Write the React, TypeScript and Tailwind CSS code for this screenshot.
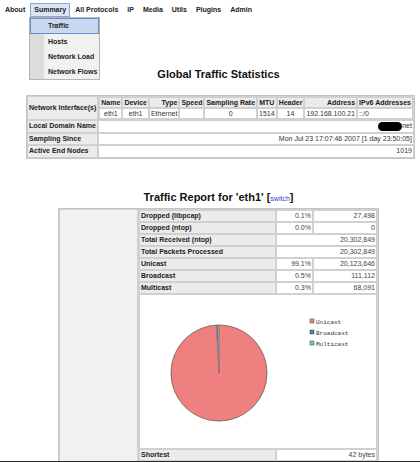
import React from "react";

const ifaceCols = [
  { head: "Name", val: "eth1", h: "text-center", v: "text-center" },
  { head: "Device", val: "eth1", h: "text-center", v: "text-center" },
  { head: "Type", val: "Ethernet", h: "text-right", v: "text-left" },
  { head: "Speed", val: "", h: "text-center", v: "text-center" },
  { head: "Sampling Rate", val: "0", h: "text-center", v: "text-center" },
  { head: "MTU", val: "1514", h: "text-center", v: "text-left" },
  { head: "Header", val: "14", h: "text-center", v: "text-center" },
  { head: "Address", val: "192.168.100.21", h: "text-right", v: "text-left" },
  { head: "IPv6 Addresses", val: "::/0", h: "text-left", v: "text-left" },
];

const trafficRows = [
  { label: "Dropped (libpcap)", pct: "0.1%", val: "27,498" },
  { label: "Dropped (ntop)", pct: "0.0%", val: "0" },
  { label: "Total Received (ntop)", val: "20,302,849" },
  { label: "Total Packets Processed", val: "20,302,849" },
  { label: "Unicast", pct: "99.1%", val: "20,123,646" },
  { label: "Broadcast", pct: "0.5%", val: "111,112" },
  { label: "Multicast", pct: "0.3%", val: "68,091" },
];

const slices = [
  { name: "Unicast", pct: 99.1, color: "#f08080" },
  { name: "Broadcast", pct: 0.5, color: "#4682b4" },
  { name: "Multicast", pct: 0.4, color: "#66cdaa" },
];

function TopMenu() {
  const items = ["About", "Summary", "All Protocols", "IP", "Media", "Utils", "Plugins", "Admin"];
  return (
    <nav className="flex items-start gap-[1px] pl-[1px] pt-[3px] h-[17px] font-bold">
      {items.map((it) =>
        it === "Summary" ? (
          <span
            key={it}
            className="h-[14px] leading-[12px] px-[3px] border border-[#8fa6c6] bg-[#d9e5f5]"
          >
            {it}
          </span>
        ) : (
          <span key={it} className="h-[14px] leading-[14px] px-[4px]">
            {it}
          </span>
        )
      )}
    </nav>
  );
}

function SummaryDropdown() {
  return (
    <div className="absolute left-[29px] top-[17px] w-[71px] border border-[#b4b4b4] font-bold bg-[linear-gradient(to_right,#dcdcdc_14px,#f1f1f1_14px)]">
      <div className="h-[16px] leading-[14px] pl-[17px] border border-[#6b8cc4] bg-[#c8d8f1]">Traffic</div>
      {["Hosts", "Network Load", "Network Flows"].map((t) => (
        <div key={t} className="h-[15px] leading-[15px] pl-[18px]">
          {t}
        </div>
      ))}
    </div>
  );
}

function GlobalStats() {
  const label =
    "bg-[#ebebeb] border border-[#d0d0d0] font-bold px-[1px] leading-[10.5px] text-left whitespace-nowrap";
  const value =
    "bg-white border border-[#d0d0d0] px-[1px] leading-[10.5px] text-right text-[#333] whitespace-nowrap";
  return (
    <table className="ml-[26px] mt-[14px] w-[385px] border border-[#c4c4c4] border-separate border-spacing-0">
      <tbody>
        <tr>
          <th className={`${label} w-[71px]`}>Network Interface(s)</th>
          <td className="border border-[#d0d0d0] p-0">
            <table className="w-full border-separate border-spacing-0">
              <tbody>
                <tr>
                  {ifaceCols.map((c) => (
                    <th
                      key={c.head}
                      className={`bg-[#ebebeb] border border-[#d0d0d0] font-bold px-[1px] leading-[9px] whitespace-nowrap ${c.h}`}
                    >
                      {c.head}
                    </th>
                  ))}
                </tr>
                <tr>
                  {ifaceCols.map((c) => (
                    <td
                      key={c.head}
                      className={`bg-white border border-[#d0d0d0] px-[1px] leading-[9px] text-[#333] whitespace-nowrap ${c.v}`}
                    >
                      {c.val}
                    </td>
                  ))}
                </tr>
              </tbody>
            </table>
          </td>
        </tr>
        <tr>
          <th className={label}>Local Domain Name</th>
          <td className={value}>
            <span className="inline-block w-[24px] h-[9px] rounded-full bg-black align-middle" />
            <span className="align-middle">net</span>
          </td>
        </tr>
        <tr>
          <th className={label}>Sampling Since</th>
          <td className={value}>Mon Jul 23 17:07:46 2007 [1 day 23:50:05]</td>
        </tr>
        <tr>
          <th className={label}>Active End Nodes</th>
          <td className={value}>1019</td>
        </tr>
      </tbody>
    </table>
  );
}

function polar(cx: number, cy: number, r: number, frac: number) {
  const a = frac * Math.PI * 2 - Math.PI / 2;
  return [cx + r * Math.cos(a), cy + r * Math.sin(a)];
}

function PieChart() {
  const cx = 79;
  const cy = 78;
  const r = 48;
  let acc = 0;
  const total = slices.reduce((s, x) => s + x.pct, 0);
  return (
    <svg width="236" height="153" viewBox="0 0 236 153" className="block">
      {slices.map((s) => {
        const start = acc / total;
        acc += s.pct;
        const end = acc / total;
        const [x1, y1] = polar(cx, cy, r, start);
        const [x2, y2] = polar(cx, cy, r, end);
        const large = end - start > 0.5 ? 1 : 0;
        return (
          <path
            key={s.name}
            d={`M${cx},${cy} L${x1},${y1} A${r},${r} 0 ${large} 1 ${x2},${y2} Z`}
            fill={s.color}
            stroke="#7a6a6a"
            strokeWidth="0.4"
          />
        );
      })}
      <circle cx={cx} cy={cy} r={r} fill="none" stroke="#6b5b5b" strokeWidth="0.6" />
      {slices.map((s, i) => (
        <g key={s.name}>
          <rect x="170" y={24 + i * 11} width="4" height="4" fill={s.color} stroke="#444" strokeWidth="0.5" />
          <text
            x="176"
            y={28.5 + i * 11}
            fontSize="6"
            fontFamily="'Liberation Mono', 'DejaVu Sans Mono', monospace"
            fill="#333"
          >
            {s.name}
          </text>
        </g>
      ))}
    </svg>
  );
}

function TrafficReport() {
  const label =
    "bg-[#ebebeb] border border-[#d0d0d0] font-bold px-[1px] leading-[10px] text-left whitespace-nowrap";
  const value =
    "bg-white border border-[#d0d0d0] px-[1px] leading-[10px] text-right text-[#444] whitespace-nowrap";
  return (
    <table className="ml-[58px] mt-[3px] w-[321px] border border-[#c4c4c4] border-separate border-spacing-0">
      <tbody>
        <tr>
          <td className="w-[80px] bg-[#f1f1f1] border border-[#d0d0d0]" />
          <td className="border border-[#d0d0d0] p-0 align-top">
            <table className="w-full border-separate border-spacing-0">
              <tbody>
                {trafficRows.map((row) => (
                  <tr key={row.label}>
                    <th className={`${label} w-[137px]`}>{row.label}</th>
                    {row.pct ? (
                      <>
                        <td className={`${value} w-[37px]`}>{row.pct}</td>
                        <td className={value}>{row.val}</td>
                      </>
                    ) : (
                      <td colSpan={2} className={value}>
                        {row.val}
                      </td>
                    )}
                  </tr>
                ))}
                <tr>
                  <td colSpan={3} className="bg-white border border-[#d0d0d0] p-0">
                    <PieChart />
                  </td>
                </tr>
                <tr>
                  <th className={label}>Shortest</th>
                  <td colSpan={2} className={value}>
                    42 bytes
                  </td>
                </tr>
              </tbody>
            </table>
          </td>
        </tr>
      </tbody>
    </table>
  );
}

export default function App() {
  return (
    <div className="relative w-[420px] h-[462px] overflow-hidden bg-white text-[7px] leading-[9px] text-[#222] font-['Liberation_Sans',Arial,sans-serif]">
      <TopMenu />
      <SummaryDropdown />
      <h1 className="pl-[17px] pt-[51px] text-center text-[11px] leading-[13px] font-bold text-[#111]">
        Global Traffic Statistics
      </h1>
      <GlobalStats />
      <h2 className="pl-[17px] mt-[32px] text-center text-[11px] leading-[13px] font-bold text-[#111]">
        Traffic Report for 'eth1' [<a className="text-[7px] font-normal text-[#3838c8]">switch</a>]
      </h2>
      <TrafficReport />
      <div className="absolute bottom-0 left-0 right-0 h-px bg-[#2b2b2b]" />
    </div>
  );
}
